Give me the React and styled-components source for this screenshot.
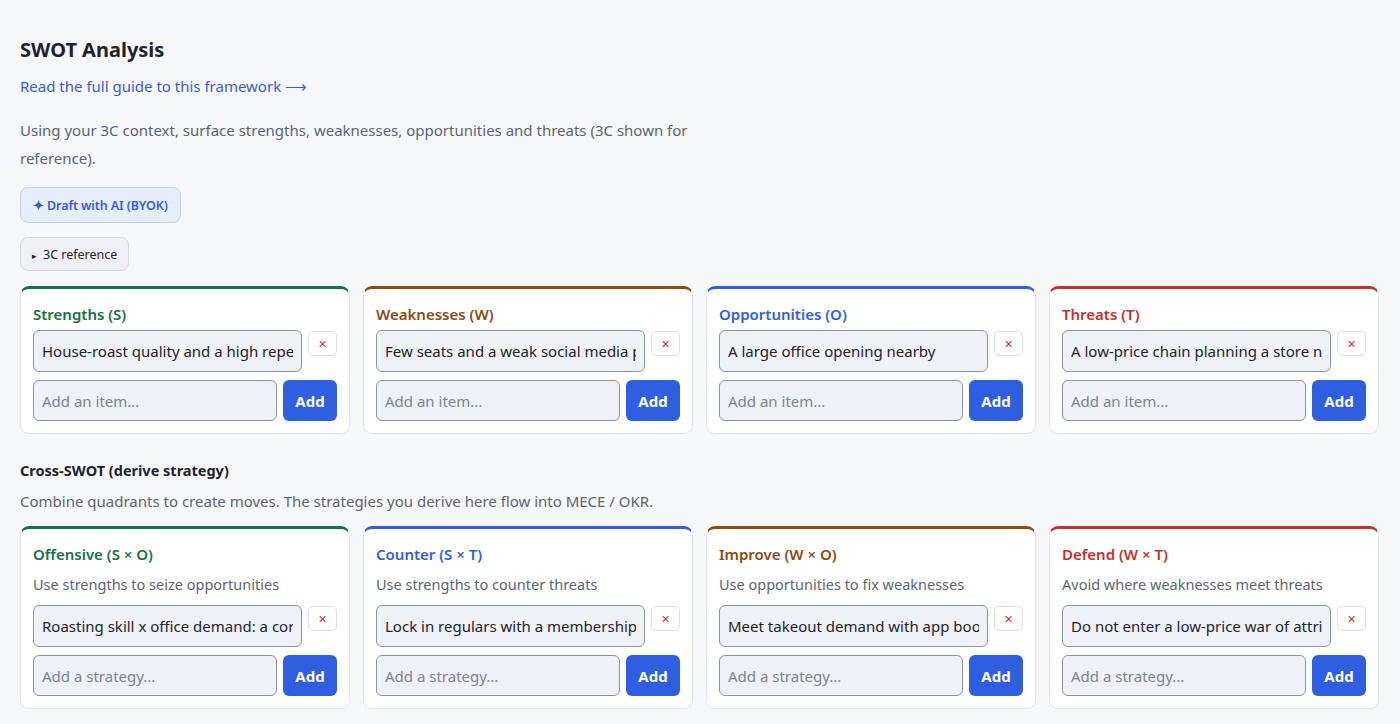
import * as React from "react";
import { useState } from "react";
import styled, { createGlobalStyle } from "styled-components";

const GlobalStyle = createGlobalStyle`
  * { box-sizing: border-box; }
  body {
    margin: 0;
    background: #f6f7f9;
    font-family: "Noto Sans", "Open Sans", sans-serif;
    color: #1f2330;
  }
`;

const tones = {
  green: "#17704a",
  brown: "#8a4b14",
  blue: "#2f5fe0",
  red: "#c0322b",
};

const Page = styled.div`
  padding: 36px 21px 16px 20px;
`;

const Title = styled.h2`
  margin: 0 0 11px;
  font-size: 20px;
  line-height: 28px;
  font-weight: 700;
`;

const GuideLink = styled.a`
  display: block;
  font-size: 15px;
  line-height: 22px;
  color: #3b5bdb;
  text-decoration: none;
`;

const Lead = styled.p`
  margin: 19px 0 15px;
  max-width: 700px;
  font-size: 15px;
  line-height: 28px;
  color: #5b6472;
`;

const Actions = styled.div`
  display: flex;
  flex-direction: column;
  align-items: flex-start;
  gap: 14px;
  margin-bottom: 15px;
`;

const AiButton = styled.button`
  height: 36px;
  padding: 0 12px;
  border: 1px solid #c5d2f4;
  border-radius: 8px;
  background: #e6edfd;
  color: #2f5fe0;
  font-family: inherit;
  font-size: 12.5px;
  font-weight: 600;
  letter-spacing: -0.1px;
  cursor: pointer;
`;

const ToggleButton = styled.button`
  height: 34px;
  padding: 0 11px;
  border: 1px solid #d5d9df;
  border-radius: 8px;
  background: #eef0f3;
  color: #1f2330;
  font-family: inherit;
  font-size: 12.5px;
  cursor: pointer;
  span {
    font-size: 9px;
    margin-right: 6px;
  }
`;

const Grid = styled.div`
  display: grid;
  grid-template-columns: repeat(4, 1fr);
  gap: 13px;
`;

const Card = styled.div`
  background: #fff;
  border: 1px solid #e1e4e9;
  border-top: 3px solid ${(p) => tones[p.tone]};
  border-radius: 9px;
  padding: 14px 12px 12px;
`;

const CardTitle = styled.div`
  font-size: 15px;
  line-height: 22px;
  font-weight: 600;
  color: ${(p) => tones[p.tone]};
  margin-bottom: 5px;
`;

const CardHint = styled.div`
  font-size: 14.5px;
  line-height: 22px;
  color: #5b6472;
  margin: 8px 0 10px;
`;

const List = styled.div`
  display: flex;
  flex-direction: column;
  gap: 8px;
`;

const Row = styled.div`
  display: flex;
  align-items: flex-start;
  gap: 6px;
`;

const Field = styled.input`
  flex: 1;
  min-width: 0;
  height: ${(p) => (p.$item ? 42 : 41)}px;
  padding: 0 8px;
  border: 1px solid #8b93a3;
  border-radius: 6px;
  background: #eef1f5;
  color: #1f2330;
  font-family: inherit;
  font-size: 15px;
  outline: none;
  &::placeholder {
    color: #7b8494;
  }
`;

const RemoveButton = styled.button`
  flex: none;
  width: 29px;
  height: 25px;
  margin-top: 1px;
  padding: 0;
  border: 1px solid #dde1e6;
  border-radius: 5px;
  background: #fff;
  color: #c0322b;
  font-size: 14px;
  line-height: 1;
  cursor: pointer;
`;

const AddButton = styled.button`
  flex: none;
  width: 54px;
  height: 41px;
  border: none;
  border-radius: 6px;
  background: #2f5fe0;
  color: #fff;
  font-family: inherit;
  font-size: 15px;
  font-weight: 700;
  cursor: pointer;
`;

const SectionTitle = styled.h3`
  margin: 25px 0 9px;
  font-size: 14.5px;
  line-height: 22px;
  font-weight: 700;
`;

const SectionLead = styled.p`
  margin: 0 0 14px;
  font-size: 15px;
  line-height: 22px;
  color: #5b6472;
`;

const swot = [
  { key: "s", tone: "green", title: "Strengths (S)", items: ["House-roast quality and a high repeat rate"] },
  { key: "w", tone: "brown", title: "Weaknesses (W)", items: ["Few seats and a weak social media presence"] },
  { key: "o", tone: "blue", title: "Opportunities (O)", items: ["A large office opening nearby"] },
  { key: "t", tone: "red", title: "Threats (T)", items: ["A low-price chain planning a store nearby"] },
];

const cross = [
  {
    key: "so",
    tone: "green",
    title: "Offensive (S × O)",
    hint: "Use strengths to seize opportunities",
    items: ["Roasting skill x office demand: a corporate subscription"],
  },
  {
    key: "st",
    tone: "blue",
    title: "Counter (S × T)",
    hint: "Use strengths to counter threats",
    items: ["Lock in regulars with a membership program"],
  },
  {
    key: "wo",
    tone: "brown",
    title: "Improve (W × O)",
    hint: "Use opportunities to fix weaknesses",
    items: ["Meet takeout demand with app booking"],
  },
  {
    key: "wt",
    tone: "red",
    title: "Defend (W × T)",
    hint: "Avoid where weaknesses meet threats",
    items: ["Do not enter a low-price war of attrition"],
  },
];

function Quadrant({ tone, title, hint, items, placeholder }) {
  const [list, setList] = useState(items);
  const [draft, setDraft] = useState("");

  function handleAdd() {
    if (!draft.trim()) return;
    setList([...list, draft.trim()]);
    setDraft("");
  }

  return (
    <Card tone={tone}>
      <CardTitle tone={tone}>{title}</CardTitle>
      {hint && <CardHint>{hint}</CardHint>}
      <List>
        {list.map((item, i) => (
          <Row key={i}>
            <Field
              $item
              value={item}
              onChange={(e) => setList(list.map((v, j) => (j === i ? e.target.value : v)))}
            />
            <RemoveButton type="button" onClick={() => setList(list.filter((_, j) => j !== i))}>
              ×
            </RemoveButton>
          </Row>
        ))}
        <Row>
          <Field placeholder={placeholder} value={draft} onChange={(e) => setDraft(e.target.value)} />
          <AddButton type="button" onClick={handleAdd}>
            Add
          </AddButton>
        </Row>
      </List>
    </Card>
  );
}

export default function App() {
  return (
    <Page>
      <GlobalStyle />
      <Title>SWOT Analysis</Title>
      <GuideLink href="#">Read the full guide to this framework ⟶</GuideLink>
      <Lead>
        Using your 3C context, surface strengths, weaknesses, opportunities and threats (3C shown for
        reference).
      </Lead>
      <Actions>
        <AiButton type="button">✦ Draft with AI (BYOK)</AiButton>
        <ToggleButton type="button">
          <span>▸</span>3C reference
        </ToggleButton>
      </Actions>

      <Grid>
        {swot.map((q) => (
          <Quadrant key={q.key} {...q} placeholder="Add an item..." />
        ))}
      </Grid>

      <SectionTitle>Cross-SWOT (derive strategy)</SectionTitle>
      <SectionLead>
        Combine quadrants to create moves. The strategies you derive here flow into MECE / OKR.
      </SectionLead>
      <Grid>
        {cross.map((q) => (
          <Quadrant key={q.key} {...q} placeholder="Add a strategy..." />
        ))}
      </Grid>
    </Page>
  );
}
